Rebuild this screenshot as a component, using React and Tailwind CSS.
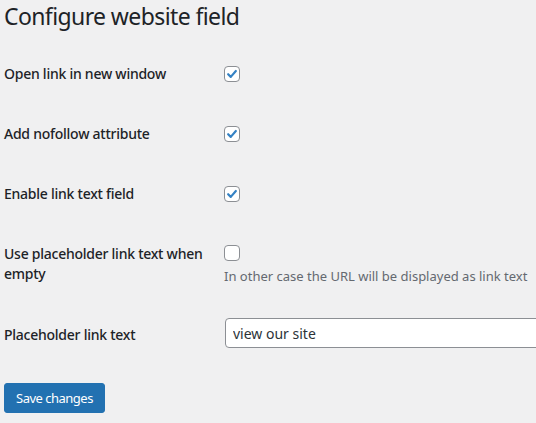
import React from 'react';

const font = { fontFamily: '"Noto Sans", "Open Sans", sans-serif' };

function Check({ checked }) {
  return (
    <span className="flex h-4 w-4 shrink-0 items-center justify-center rounded-[4px] border border-[#8c8f94] bg-white">
      {checked && (
        <svg viewBox="0 0 16 16" className="h-[16px] w-[16px]">
          <path d="M3.6 8.3 L6.6 11.3 L12.4 4.6" fill="none" stroke="#3582c4" strokeWidth="2.5" strokeLinecap="round" strokeLinejoin="round" />
        </svg>
      )}
    </span>
  );
}

const rows = [
  { label: 'Open link in new window', checked: true },
  { label: 'Add nofollow attribute', checked: true },
  { label: 'Enable link text field', checked: true },
];

export default function App() {
  return (
    <div className="min-h-screen w-[536px] overflow-hidden bg-[#f0f0f1] pl-[4px] text-[#1d2327]" style={font}>
      <h1 className="mb-[13px] pt-[1px] text-[23px] font-normal leading-[30px] tracking-[-0.6px]">Configure website field</h1>

      {rows.map(r => (
        <div key={r.label} className="flex h-[60px] items-center">
          <div className="w-[220px] shrink-0 text-[14px] font-medium leading-[20px] tracking-[-0.25px]">{r.label}</div>
          <Check checked={r.checked} />
        </div>
      ))}

      <div className="flex pb-[17px]">
        <div className="w-[220px] shrink-0 pt-[20px] pr-[10px] text-[14px] font-medium leading-[20px] tracking-[-0.25px]">Use placeholder link text when empty</div>
        <div className="flex flex-col pt-[21px]">
          <Check checked={false} />
          <p className="mt-[5px] whitespace-nowrap text-[13px] leading-[20px] text-[#646970]">In other case the URL will be displayed as link text</p>
        </div>
      </div>

      <div className="flex items-center py-[15px]">
        <div className="w-[221px] shrink-0 pt-[3px] text-[14px] font-medium leading-[20px] tracking-[-0.25px]">Placeholder link text</div>
        <input
          type="text"
          defaultValue="view our site"
          className="h-[30px] w-[350px] shrink-0 rounded-[4px] border border-[#8c8f94] bg-white px-[7px] text-[14px] text-[#2c3338] outline-none"
          style={font}
        />
      </div>

      <button className="mt-[20px] h-[30px] rounded-[3px] border border-[#2271b1] bg-[#2271b1] px-[11px] text-[13px] leading-[28px] tracking-[-0.5px] text-white" style={font}>
        Save changes
      </button>
    </div>
  );
}
